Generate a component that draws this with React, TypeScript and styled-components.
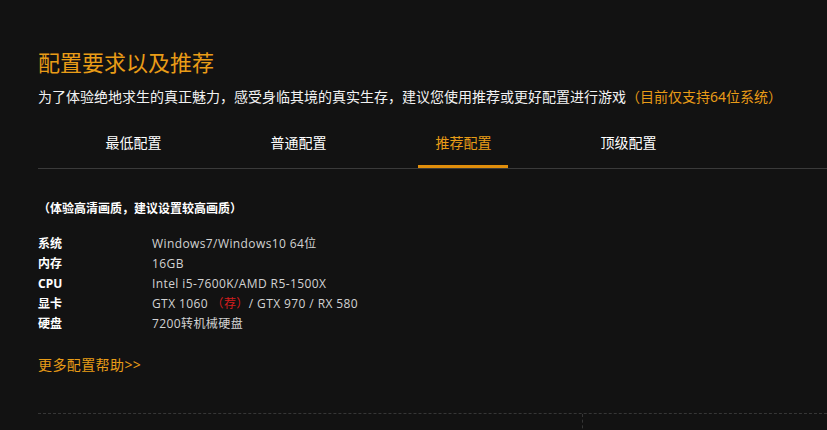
import React, { useState } from "react";
import styled, { createGlobalStyle } from "styled-components";

const GlobalStyle = createGlobalStyle`
  html, body {
    margin: 0;
    padding: 0;
    background: #121212;
  }
  body {
    font-family: "Noto Sans", "Noto Sans CJK SC", sans-serif;
    color: #fff;
  }
`;

const ORANGE = "#e89c17";

type specRow = {
    label: string,
    value: React.ReactNode,
}

const tabs = ["最低配置", "普通配置", "推荐配置", "顶级配置"];

const Page = styled.section`
    padding: 47px 0 0 38px;
    min-height: 430px;
    box-sizing: border-box;
    overflow: hidden;
`;

const Title = styled.h2`
    margin: 0;
    font-size: 22px;
    line-height: 30px;
    font-weight: normal;
    color: ${ORANGE};
`;

const Intro = styled.p`
    margin: 10px 0 0;
    font-size: 14px;
    line-height: 20px;
    color: #f2f2f2;
    white-space: nowrap;
    span{
        color: ${ORANGE};
    }
`;

const TabBar = styled.ul`
    display: flex;
    margin: 11px 0 0;
    padding: 0 0 0 13px;
    list-style: none;
    border-bottom: 1px solid #3a3a3a;
`;

const Tab = styled.li<{ $active: boolean }>`
    position: relative;
    width: 165px;
    height: 50px;
    line-height: 50px;
    text-align: center;
    font-size: 14px;
    cursor: pointer;
    color: ${props => props.$active ? ORANGE : '#fff'};
    &::after{
        content: '';
        display: ${props => props.$active ? 'block' : 'none'};
        position: absolute;
        left: 37px;
        right: 38px;
        bottom: 0;
        height: 3px;
        background: #e08e0b;
    }
`;

const Note = styled.h4`
    margin: 30px 0 0;
    font-size: 12px;
    line-height: 20px;
    font-weight: bold;
    color: #fff;
`;

const SpecList = styled.dl`
    display: grid;
    grid-template-columns: 114px auto;
    margin: 15px 0 0;
    font-size: 12px;
    line-height: 20px;
    dt{
        font-weight: bold;
        color: #fff;
    }
    dd{
        margin: 0;
        font-family: "Open Sans", "Noto Sans CJK SC", sans-serif;
        letter-spacing: 0.4px;
        color: #d2d2d2;
    }
    .rec{
        color: #d41e1e;
    }
`;

const MoreLink = styled.a`
    display: inline-block;
    margin-top: 21px;
    font-size: 14px;
    line-height: 20px;
    color: ${ORANGE};
    text-decoration: none;
    letter-spacing: 0.4px;
`;

const Footer = styled.div`
    display: grid;
    grid-template-columns: 545px auto;
    height: 20px;
    margin-top: 38px;
    border-top: 1px dashed #363636;
    div:first-child{
        border-right: 1px dashed #363636;
    }
`;

const specs: specRow[] = [
    { label: '系统', value: 'Windows7/Windows10 64位' },
    { label: '内存', value: '16GB' },
    { label: 'CPU', value: 'Intel i5-7600K/AMD R5-1500X' },
    { label: '显卡', value: <>GTX 1060 <span className="rec">（荐）</span>/ GTX 970 / RX 580</> },
    { label: '硬盘', value: '7200转机械硬盘' },
];

const App = () => {
    const [active, setActive] = useState(2);
    return (
        <Page>
            <GlobalStyle />
            <Title>配置要求以及推荐</Title>
            <Intro>为了体验绝地求生的真正魅力，感受身临其境的真实生存，建议您使用推荐或更好配置进行游戏<span>（目前仅支持64位系统）</span></Intro>
            <TabBar>
                {
                    tabs.map((t, i) => (
                        <Tab key={t} $active={i === active} onClick={() => setActive(i)}>{t}</Tab>
                    ))
                }
            </TabBar>
            <Note>（体验高清画质，建议设置较高画质）</Note>
            <SpecList>
                {
                    specs.map(s => (
                        <React.Fragment key={s.label}>
                            <dt>{s.label}</dt>
                            <dd>{s.value}</dd>
                        </React.Fragment>
                    ))
                }
            </SpecList>
            <MoreLink href="#">更多配置帮助&gt;&gt;</MoreLink>
            <Footer>
                <div />
                <div />
            </Footer>
        </Page>
    );
}

export default App;
